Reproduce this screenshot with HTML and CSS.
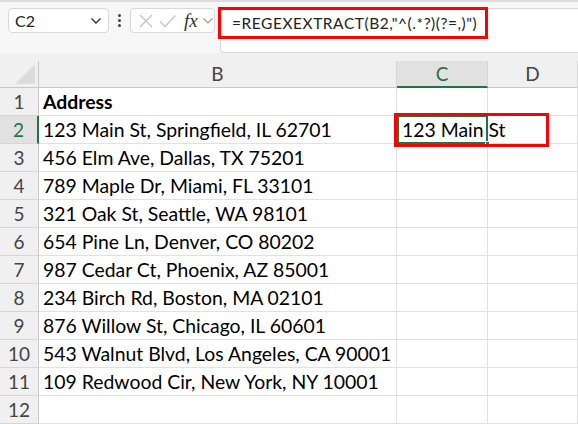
FILE: index.html
```html
<!DOCTYPE html>
<html lang="en">
<head>
    <meta charset="UTF-8">
    <title>Sheet1</title>
    <link rel="stylesheet" href="styles.css">
</head>
<body>
    <div class="toolbar">
        <div class="name-box">
            <span>C2</span>
            <svg class="chevron" width="12" height="8" viewBox="0 0 12 8"><path d="M1.5 1.5 L6 6 L10.5 1.5" fill="none" stroke="#333" stroke-width="1.4"/></svg>
        </div>
        <div class="dots"><i></i><i></i><i></i></div>
        <div class="fx-box">
            <svg width="16" height="16" viewBox="0 0 16 16"><path d="M2 2 L14 14 M14 2 L2 14" stroke="#c4c4c4" stroke-width="1.3"/></svg>
            <svg width="19" height="16" viewBox="0 0 19 16"><path d="M2 8.5 L7 13.5 L17.5 2.5" fill="none" stroke="#c4c4c4" stroke-width="1.3"/></svg>
            <span class="fx">fx</span>
            <svg class="chevron" width="12" height="8" viewBox="0 0 12 8"><path d="M1.5 1.5 L6 6 L10.5 1.5" fill="none" stroke="#999" stroke-width="1.2"/></svg>
        </div>
        <div class="formula-bar">
            <span class="formula">=REGEXEXTRACT(B2,"^(.*?)(?=,)")</span>
        </div>
    </div>

    <div class="sheet">
        <div class="corner"></div>
        <div class="col-head">B</div>
        <div class="col-head active">C</div>
        <div class="col-head">D</div>

        <div class="row-head">1</div><div class="cell bold">Address</div><div class="cell"></div><div class="cell"></div>
        <div class="row-head active">2</div><div class="cell">123 Main St, Springfield, IL 62701</div><div class="cell selected"><span class="overflow">123 Main St</span><i class="handle"></i></div><div class="cell"></div>
        <div class="row-head">3</div><div class="cell">456 Elm Ave, Dallas, TX 75201</div><div class="cell"></div><div class="cell"></div>
        <div class="row-head">4</div><div class="cell">789 Maple Dr, Miami, FL 33101</div><div class="cell"></div><div class="cell"></div>
        <div class="row-head">5</div><div class="cell">321 Oak St, Seattle, WA 98101</div><div class="cell"></div><div class="cell"></div>
        <div class="row-head">6</div><div class="cell">654 Pine Ln, Denver, CO 80202</div><div class="cell"></div><div class="cell"></div>
        <div class="row-head">7</div><div class="cell">987 Cedar Ct, Phoenix, AZ 85001</div><div class="cell"></div><div class="cell"></div>
        <div class="row-head">8</div><div class="cell">234 Birch Rd, Boston, MA 02101</div><div class="cell"></div><div class="cell"></div>
        <div class="row-head">9</div><div class="cell">876 Willow St, Chicago, IL 60601</div><div class="cell"></div><div class="cell"></div>
        <div class="row-head">10</div><div class="cell">543 Walnut Blvd, Los Angeles, CA 90001</div><div class="cell"></div><div class="cell"></div>
        <div class="row-head">11</div><div class="cell">109 Redwood Cir, New York, NY 10001</div><div class="cell"></div><div class="cell"></div>
        <div class="row-head">12</div><div class="cell"></div><div class="cell"></div><div class="cell"></div>

        <!-- red callouts over the formula and the result -->
        <div class="mark mark-result"></div>
    </div>
    <div class="mark mark-formula"></div>
</body>
</html>
```

FILE: styles.css
```css
* {
    box-sizing: border-box;
    margin: 0;
    padding: 0;
}

body {
    width: 578px;
    height: 424px;
    overflow: hidden;
    font-family: 'Lato', 'Liberation Sans', sans-serif;
    background: #fff;
    color: #000;
    position: relative;
}

/* Barra de fórmulas */
.toolbar {
    height: 53px;
    background: #f7f7f7;
    border-top: 2px solid #dcdcdc;
    display: flex;
    align-items: flex-start;
    padding: 6px 0 0 8px;
}

.name-box {
    width: 101px;
    height: 25px;
    background: #fff;
    border: 1px solid #d8d8d8;
    border-radius: 4px;
    display: flex;
    align-items: center;
    justify-content: space-between;
    padding: 0 6px 0 6px;
    font-size: 16px;
    color: #222;
}

.dots {
    width: 21px;
    height: 25px;
    display: flex;
    flex-direction: column;
    align-items: center;
    justify-content: center;
    gap: 2px;
}

.dots i {
    width: 3px;
    height: 3px;
    background: #444;
    border-radius: 50%;
}

.fx-box {
    width: 85px;
    height: 25px;
    background: #fff;
    border: 1px solid #d8d8d8;
    border-radius: 4px;
    display: flex;
    align-items: center;
    gap: 4px;
    padding-left: 7px;
}

.fx {
    font-family: 'Liberation Serif', serif;
    font-style: italic;
    font-size: 19px;
    color: #333;
    margin-left: 3px;
}

.formula-bar {
    flex: 1;
    height: 45px;
    margin-left: 5px;
    background: #fff;
    border: 1px solid #d8d8d8;
    border-right: none;
    border-radius: 4px 0 0 4px;
    padding: 4px 0 0 11px;
}

.formula {
    font-size: 15.5px;
    letter-spacing: 0.55px;
    color: #222;
}

/* Grade da planilha */
.sheet {
    position: relative;
    background: #f0f0f0;
    padding-top: 8px;
    display: grid;
    grid-template-columns: 39px 358px 91px 1fr;
    grid-template-rows: 27px repeat(12, 28px);
}

.corner {
    border-right: 1px solid #c8c8c8;
    border-bottom: 1px solid #c8c8c8;
    position: relative;
}

.corner::after {
    content: '';
    position: absolute;
    right: 3px;
    bottom: 3px;
    border-style: solid;
    border-width: 0 0 20px 20px;
    border-color: transparent transparent #dcdcdc transparent;
}

.col-head {
    background: #f0f0f0;
    border-bottom: 1px solid #c8c8c8;
    border-right: 1px solid #d6d6d6;
    text-align: center;
    font-size: 19px;
    line-height: 26px;
    color: #444;
}

.col-head.active {
    background: #e1e1e1;
    color: #217346;
    border-bottom: 2px solid #217346;
}

.row-head {
    background: #f0f0f0;
    border-right: 1px solid #c8c8c8;
    border-bottom: 1px solid #d6d6d6;
    text-align: center;
    font-size: 19px;
    line-height: 27px;
    color: #444;
}

.row-head.active {
    background: #e1e1e1;
    color: #217346;
    border-right: 2px solid #217346;
}

.cell {
    background: #fff;
    border-right: 1px solid #e1e1e1;
    border-bottom: 1px solid #e1e1e1;
    font-size: 19.4px;
    line-height: 27px;
    padding-left: 4px;
    white-space: nowrap;
    position: relative;
}

.cell.bold {
    font-weight: 700;
}

.cell.selected {
    border: 2px solid #217346;
    border-top-width: 1px;
    z-index: 1;
}

.overflow {
    position: absolute;
    left: 3px;
    top: -1px;
}

.handle {
    position: absolute;
    right: -4px;
    bottom: -4px;
    width: 5px;
    height: 5px;
    background: #217346;
    border: 1px solid #fff;
}

/* Destaques em vermelho */
.mark {
    position: absolute;
    border: 3px solid #f00;
    z-index: 2;
}

.mark-formula {
    left: 218px;
    top: 7px;
    width: 270px;
    height: 32px;
}

.mark-result {
    left: 394px;
    top: 60px;
    width: 155px;
    height: 34px;
}
```
